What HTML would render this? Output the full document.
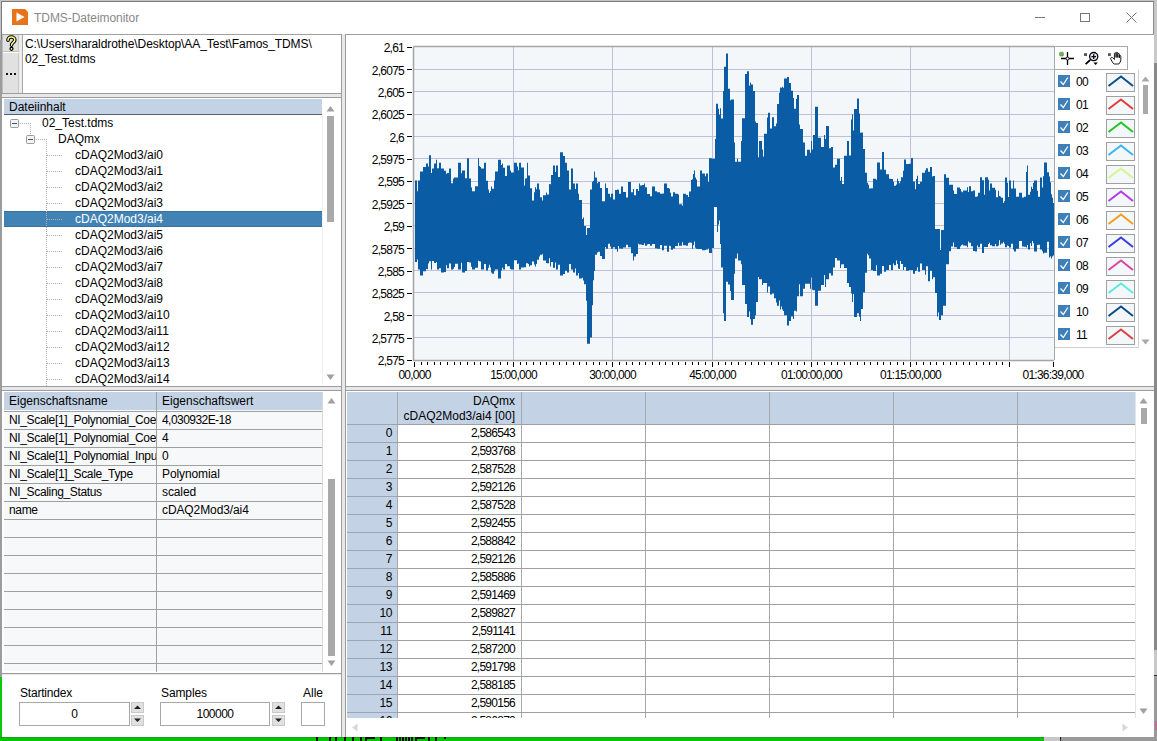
<!DOCTYPE html><html><head><meta charset="utf-8"><style>
*{margin:0;padding:0}
html,body{width:1157px;height:741px;overflow:hidden;background:#8c8c8c;font-family:"Liberation Sans",sans-serif;color:#000}
.a{position:absolute}
.t{position:absolute;white-space:nowrap;font-size:12px}
</style></head><body><div class="a" style="left:1154px;top:0px;width:3px;height:63px;background:#c8c8c8"></div>
<div class="a" style="left:1154px;top:63px;width:3px;height:587px;background:#8a8a8a"></div>
<div class="a" style="left:1154px;top:650px;width:3px;height:25px;background:#c8c8c8"></div>
<div class="a" style="left:1154px;top:675px;width:3px;height:1px;background:#333"></div>
<div class="a" style="left:1154px;top:676px;width:3px;height:65px;background:#9a9a9a"></div>
<div class="a" style="left:1155px;top:721px;width:2px;height:9px;background:#c07090"></div>
<div class="a" style="left:0px;top:0px;width:1154px;height:737px;background:#c4c4c4"></div>
<div class="a" style="left:1px;top:1px;width:1153px;height:736px;background:#fff;border-top:1px solid #7c7c7c;border-left:1px solid #7c7c7c;border-right:1px solid #8a8a8a;box-sizing:border-box"></div>
<div class="a" style="left:0px;top:40px;width:2px;height:637px;background:#9c9c9c"></div>
<svg class="a" style="left:12px;top:9px" width="17" height="17" viewBox="0 0 17 17"><path d="M0 0H13L16 3V16H0Z" fill="#e8731d"/><path d="M4.5 3.5L12.5 8L4.5 12.5Z" fill="#fff"/></svg>
<div class="t" style="left:34px;top:10px;line-height:16px;color:#888;font-size:12px;letter-spacing:-0.05px">TDMS-Dateimonitor</div>
<div class="a" style="left:1035px;top:17px;width:10px;height:1px;background:#777"></div>
<div class="a" style="left:1080px;top:13px;width:10px;height:9px;border:1px solid #777;box-sizing:border-box"></div>
<svg class="a" style="left:1126px;top:12px" width="11" height="11"><path d="M0.5 0.5L10.5 10.5M10.5 0.5L0.5 10.5" stroke="#777" stroke-width="1"/></svg>
<div class="a" style="left:2px;top:34px;width:1152px;height:1px;background:#a0a0a0"></div>
<div class="a" style="left:2px;top:93px;width:339px;height:1px;background:#9c9c9c"></div>
<div class="a" style="left:2px;top:94px;width:339px;height:3px;background:#e8e8ea"></div>
<div class="a" style="left:2px;top:97px;width:339px;height:1px;background:#9c9c9c"></div>
<div class="a" style="left:2px;top:386px;width:1152px;height:1px;background:#9c9c9c"></div>
<div class="a" style="left:2px;top:387px;width:1152px;height:3px;background:#e8e8ea"></div>
<div class="a" style="left:2px;top:390px;width:1152px;height:1px;background:#9c9c9c"></div>
<div class="a" style="left:2px;top:673px;width:339px;height:1px;background:#9c9c9c"></div>
<div class="a" style="left:2px;top:674px;width:339px;height:1px;background:#e8e8ea"></div>
<div class="a" style="left:341px;top:34px;width:1px;height:703px;background:#9c9c9c"></div>
<div class="a" style="left:342px;top:34px;width:3px;height:703px;background:#e8e8ea"></div>
<div class="a" style="left:345px;top:34px;width:1px;height:703px;background:#9c9c9c"></div>
<div class="a" style="left:3px;top:35px;width:16px;height:17px;background:#e1e1e1;border-right:1px solid #c8c8c8;border-bottom:1px solid #bdbdbd;box-sizing:border-box"></div>
<svg class="a" style="left:5px;top:35px" width="13" height="17" viewBox="0 0 13 17"><path d="M3 5.2C3 3 4.5 2 6.3 2C8.2 2 9.8 3.2 9.8 5C9.8 7.3 6.5 7.6 6.5 10.3" stroke="#000" stroke-width="3.6" fill="none" stroke-linecap="round"/><circle cx="6.5" cy="13.8" r="2.1" fill="#000"/><path d="M3 5.2C3 3 4.5 2 6.3 2C8.2 2 9.8 3.2 9.8 5C9.8 7.3 6.5 7.6 6.5 10.3" stroke="#ffff8c" stroke-width="1.5" fill="none" stroke-linecap="round"/><circle cx="6.5" cy="13.8" r="0.9" fill="#ffff8c"/></svg>
<div class="a" style="left:3px;top:53px;width:16px;height:40px;background:#e1e1e1;border-right:1px solid #c8c8c8;box-sizing:border-box"></div>
<div class="a" style="left:6px;top:73px;width:2px;height:2px;background:#111"></div>
<div class="a" style="left:10px;top:73px;width:2px;height:2px;background:#111"></div>
<div class="a" style="left:14px;top:73px;width:2px;height:2px;background:#111"></div>
<div class="a" style="left:19px;top:35px;width:3px;height:58px;background:#ececec"></div>
<div class="a" style="left:2px;top:35px;width:1px;height:58px;background:#bdbdbd"></div>
<div class="a" style="left:22px;top:35px;width:1px;height:58px;background:#a8a8a8"></div>
<div class="t" style="left:25px;top:37px;line-height:16px;font-size:12px;line-height:15px;letter-spacing:-0.07px">C:\Users\haraldrothe\Desktop\AA_Test\Famos_TDMS\<br>02_Test.tdms</div>
<div class="a" style="left:3px;top:98px;width:338px;height:288px;background:#fff"></div>
<div class="a" style="left:4px;top:99px;width:318px;height:15px;background:#c3d3e5"></div>
<div class="a" style="left:4px;top:114px;width:318px;height:1px;background:#56606c"></div>
<div class="t" style="left:9px;top:99px;line-height:16px;font-size:12px">Dateiinhalt</div>
<svg class="a" style="left:326px;top:105px" width="9" height="7"><path d="M0.5 6.5L4.5 1L8.5 6.5Z" fill="#a0a0a0"/></svg>
<div class="a" style="left:327px;top:116px;width:7px;height:106px;background:#a9a9a9"></div>
<svg class="a" style="left:326px;top:374px" width="9" height="7"><path d="M0.5 0.5L4.5 6L8.5 0.5Z" fill="#a0a0a0"/></svg>
<div class="a" style="left:322px;top:115px;width:1px;height:270px;background:#f0f0f0"></div>
<div class="a" style="left:4px;top:211px;width:318px;height:16px;background:#4283b6;border-top:1px solid #3c6f9c;border-bottom:1px solid #3c6f9c;box-sizing:border-box"></div>
<svg class="a" style="left:10px;top:119px" width="9" height="9"><rect x="0.5" y="0.5" width="8" height="8" rx="1" fill="#f4f4f6" stroke="#9a9a9a"/><path d="M2 4.5H7" stroke="#405070"/></svg>
<div class="a" style="left:20px;top:123px;width:10px;height:1px;background-image:linear-gradient(90deg,#b0b0b0 50%,transparent 50%);background-size:2px 1px"></div>
<div class="a" style="left:30px;top:123px;width:1px;height:13px;background-image:linear-gradient(180deg,#b0b0b0 50%,transparent 50%);background-size:1px 2px"></div>
<svg class="a" style="left:26px;top:135px" width="9" height="9"><rect x="0.5" y="0.5" width="8" height="8" rx="1" fill="#f4f4f6" stroke="#9a9a9a"/><path d="M2 4.5H7" stroke="#405070"/></svg>
<div class="a" style="left:36px;top:139px;width:10px;height:1px;background-image:linear-gradient(90deg,#b0b0b0 50%,transparent 50%);background-size:2px 1px"></div>
<div class="a" style="left:46px;top:139px;width:1px;height:248px;background-image:linear-gradient(180deg,#b0b0b0 50%,transparent 50%);background-size:1px 2px"></div>
<div class="t" style="left:42px;top:115px;line-height:16px;font-size:12px">02_Test.tdms</div>
<div class="t" style="left:58px;top:131px;line-height:16px;font-size:12px">DAQmx</div>
<div class="a" style="left:47px;top:155px;width:15px;height:1px;background-image:linear-gradient(90deg,#b0b0b0 50%,transparent 50%);background-size:2px 1px"></div>
<div class="t" style="left:75px;top:147px;line-height:16px;font-size:12px;color:#000">cDAQ2Mod3/ai0</div>
<div class="a" style="left:47px;top:171px;width:15px;height:1px;background-image:linear-gradient(90deg,#b0b0b0 50%,transparent 50%);background-size:2px 1px"></div>
<div class="t" style="left:75px;top:163px;line-height:16px;font-size:12px;color:#000">cDAQ2Mod3/ai1</div>
<div class="a" style="left:47px;top:187px;width:15px;height:1px;background-image:linear-gradient(90deg,#b0b0b0 50%,transparent 50%);background-size:2px 1px"></div>
<div class="t" style="left:75px;top:179px;line-height:16px;font-size:12px;color:#000">cDAQ2Mod3/ai2</div>
<div class="a" style="left:47px;top:203px;width:15px;height:1px;background-image:linear-gradient(90deg,#b0b0b0 50%,transparent 50%);background-size:2px 1px"></div>
<div class="t" style="left:75px;top:195px;line-height:16px;font-size:12px;color:#000">cDAQ2Mod3/ai3</div>
<div class="a" style="left:47px;top:219px;width:15px;height:1px;background-image:linear-gradient(90deg,#b0b0b0 50%,transparent 50%);background-size:2px 1px"></div>
<div class="t" style="left:75px;top:211px;line-height:16px;font-size:12px;color:#fff">cDAQ2Mod3/ai4</div>
<div class="a" style="left:47px;top:235px;width:15px;height:1px;background-image:linear-gradient(90deg,#b0b0b0 50%,transparent 50%);background-size:2px 1px"></div>
<div class="t" style="left:75px;top:227px;line-height:16px;font-size:12px;color:#000">cDAQ2Mod3/ai5</div>
<div class="a" style="left:47px;top:251px;width:15px;height:1px;background-image:linear-gradient(90deg,#b0b0b0 50%,transparent 50%);background-size:2px 1px"></div>
<div class="t" style="left:75px;top:243px;line-height:16px;font-size:12px;color:#000">cDAQ2Mod3/ai6</div>
<div class="a" style="left:47px;top:267px;width:15px;height:1px;background-image:linear-gradient(90deg,#b0b0b0 50%,transparent 50%);background-size:2px 1px"></div>
<div class="t" style="left:75px;top:259px;line-height:16px;font-size:12px;color:#000">cDAQ2Mod3/ai7</div>
<div class="a" style="left:47px;top:283px;width:15px;height:1px;background-image:linear-gradient(90deg,#b0b0b0 50%,transparent 50%);background-size:2px 1px"></div>
<div class="t" style="left:75px;top:275px;line-height:16px;font-size:12px;color:#000">cDAQ2Mod3/ai8</div>
<div class="a" style="left:47px;top:299px;width:15px;height:1px;background-image:linear-gradient(90deg,#b0b0b0 50%,transparent 50%);background-size:2px 1px"></div>
<div class="t" style="left:75px;top:291px;line-height:16px;font-size:12px;color:#000">cDAQ2Mod3/ai9</div>
<div class="a" style="left:47px;top:315px;width:15px;height:1px;background-image:linear-gradient(90deg,#b0b0b0 50%,transparent 50%);background-size:2px 1px"></div>
<div class="t" style="left:75px;top:307px;line-height:16px;font-size:12px;color:#000">cDAQ2Mod3/ai10</div>
<div class="a" style="left:47px;top:331px;width:15px;height:1px;background-image:linear-gradient(90deg,#b0b0b0 50%,transparent 50%);background-size:2px 1px"></div>
<div class="t" style="left:75px;top:323px;line-height:16px;font-size:12px;color:#000">cDAQ2Mod3/ai11</div>
<div class="a" style="left:47px;top:347px;width:15px;height:1px;background-image:linear-gradient(90deg,#b0b0b0 50%,transparent 50%);background-size:2px 1px"></div>
<div class="t" style="left:75px;top:339px;line-height:16px;font-size:12px;color:#000">cDAQ2Mod3/ai12</div>
<div class="a" style="left:47px;top:363px;width:15px;height:1px;background-image:linear-gradient(90deg,#b0b0b0 50%,transparent 50%);background-size:2px 1px"></div>
<div class="t" style="left:75px;top:355px;line-height:16px;font-size:12px;color:#000">cDAQ2Mod3/ai13</div>
<div class="a" style="left:47px;top:379px;width:15px;height:1px;background-image:linear-gradient(90deg,#b0b0b0 50%,transparent 50%);background-size:2px 1px"></div>
<div class="t" style="left:75px;top:371px;line-height:16px;font-size:12px;color:#000">cDAQ2Mod3/ai14</div>
<div class="a" style="left:3px;top:391px;width:338px;height:282px;background:#fff"></div>
<div class="a" style="left:4px;top:392px;width:318px;height:279px;background:#f7f8fa"></div>
<div class="a" style="left:4px;top:392px;width:318px;height:18px;background:#c3d3e5"></div>
<div class="a" style="left:156px;top:392px;width:1px;height:280px;background:#a0a0a0"></div>
<div class="a" style="left:4px;top:411px;width:318px;height:1px;background:#a0a0a0"></div>
<div class="a" style="left:4px;top:429px;width:318px;height:1px;background:#a0a0a0"></div>
<div class="a" style="left:4px;top:447px;width:318px;height:1px;background:#a0a0a0"></div>
<div class="a" style="left:4px;top:465px;width:318px;height:1px;background:#a0a0a0"></div>
<div class="a" style="left:4px;top:483px;width:318px;height:1px;background:#a0a0a0"></div>
<div class="a" style="left:4px;top:501px;width:318px;height:1px;background:#a0a0a0"></div>
<div class="a" style="left:4px;top:519px;width:318px;height:1px;background:#a0a0a0"></div>
<div class="a" style="left:4px;top:537px;width:318px;height:1px;background:#a0a0a0"></div>
<div class="a" style="left:4px;top:555px;width:318px;height:1px;background:#a0a0a0"></div>
<div class="a" style="left:4px;top:573px;width:318px;height:1px;background:#a0a0a0"></div>
<div class="a" style="left:4px;top:591px;width:318px;height:1px;background:#a0a0a0"></div>
<div class="a" style="left:4px;top:609px;width:318px;height:1px;background:#a0a0a0"></div>
<div class="a" style="left:4px;top:627px;width:318px;height:1px;background:#a0a0a0"></div>
<div class="a" style="left:4px;top:645px;width:318px;height:1px;background:#a0a0a0"></div>
<div class="a" style="left:4px;top:663px;width:318px;height:1px;background:#a0a0a0"></div>
<div class="a" style="left:322px;top:392px;width:1px;height:280px;background:#d8d8d8"></div>
<div class="t" style="left:9px;top:392px;line-height:16px;font-size:12px;line-height:18px">Eigenschaftsname</div>
<div class="t" style="left:162px;top:392px;line-height:16px;font-size:12px;line-height:18px">Eigenschaftswert</div>
<div class="t" style="left:9px;top:411px;width:147px;overflow:hidden;line-height:18px;font-size:12px;letter-spacing:-0.35px">NI_Scale[1]_Polynomial_Coefficients</div>
<div class="t" style="left:162px;top:411px;line-height:16px;font-size:12px;line-height:18px;letter-spacing:-0.55px">4,030932E-18</div>
<div class="t" style="left:9px;top:429px;width:147px;overflow:hidden;line-height:18px;font-size:12px;letter-spacing:-0.35px">NI_Scale[1]_Polynomial_Coefficients</div>
<div class="t" style="left:162px;top:429px;line-height:16px;font-size:12px;line-height:18px;letter-spacing:-0.1px">4</div>
<div class="t" style="left:9px;top:447px;width:147px;overflow:hidden;line-height:18px;font-size:12px;letter-spacing:-0.35px">NI_Scale[1]_Polynomial_Input</div>
<div class="t" style="left:162px;top:447px;line-height:16px;font-size:12px;line-height:18px;letter-spacing:-0.1px">0</div>
<div class="t" style="left:9px;top:465px;width:147px;overflow:hidden;line-height:18px;font-size:12px;letter-spacing:-0.35px">NI_Scale[1]_Scale_Type</div>
<div class="t" style="left:162px;top:465px;line-height:16px;font-size:12px;line-height:18px;letter-spacing:-0.1px">Polynomial</div>
<div class="t" style="left:9px;top:483px;width:147px;overflow:hidden;line-height:18px;font-size:12px;letter-spacing:-0.35px">NI_Scaling_Status</div>
<div class="t" style="left:162px;top:483px;line-height:16px;font-size:12px;line-height:18px;letter-spacing:-0.1px">scaled</div>
<div class="t" style="left:9px;top:501px;width:147px;overflow:hidden;line-height:18px;font-size:12px;letter-spacing:-0.35px">name</div>
<div class="t" style="left:162px;top:501px;line-height:16px;font-size:12px;line-height:18px;letter-spacing:-0.1px">cDAQ2Mod3/ai4</div>
<svg class="a" style="left:327px;top:397px" width="9" height="7"><path d="M0.5 6.5L4.5 1L8.5 6.5Z" fill="#a0a0a0"/></svg>
<div class="a" style="left:328px;top:479px;width:7px;height:177px;background:#a9a9a9"></div>
<svg class="a" style="left:327px;top:660px" width="9" height="7"><path d="M0.5 0.5L4.5 6L8.5 0.5Z" fill="#a0a0a0"/></svg>
<div class="t" style="left:20px;top:685px;line-height:16px;font-size:12px;letter-spacing:-0.2px">Startindex</div>
<div class="a" style="left:19px;top:702px;width:111px;height:24px;background:#fff;border:1px solid #a8a8a8;box-sizing:border-box"></div>
<div class="t" style="left:19px;top:706px;line-height:16px;font-size:12px;width:111px;text-align:center">0</div>
<div class="a" style="left:131px;top:702px;width:13px;height:11px;background:#e1e1e1;border:1px solid #c9c9c9;box-sizing:border-box"></div>
<svg class="a" style="left:134px;top:705px" width="7" height="5"><path d="M0 4L3.5 0.5L7 4Z" fill="#222"/></svg>
<div class="a" style="left:131px;top:715px;width:13px;height:11px;background:#e1e1e1;border:1px solid #c9c9c9;box-sizing:border-box"></div>
<svg class="a" style="left:134px;top:718px" width="7" height="5"><path d="M0 0.5L3.5 4L7 0.5Z" fill="#222"/></svg>
<div class="t" style="left:161px;top:685px;line-height:16px;font-size:12px;letter-spacing:-0.1px">Samples</div>
<div class="a" style="left:160px;top:702px;width:110px;height:24px;background:#fff;border:1px solid #a8a8a8;box-sizing:border-box"></div>
<div class="t" style="left:160px;top:706px;line-height:16px;font-size:12px;width:110px;text-align:center;letter-spacing:-0.5px">100000</div>
<div class="a" style="left:272px;top:702px;width:13px;height:11px;background:#e1e1e1;border:1px solid #c9c9c9;box-sizing:border-box"></div>
<svg class="a" style="left:275px;top:705px" width="7" height="5"><path d="M0 4L3.5 0.5L7 4Z" fill="#222"/></svg>
<div class="a" style="left:272px;top:715px;width:13px;height:11px;background:#e1e1e1;border:1px solid #c9c9c9;box-sizing:border-box"></div>
<svg class="a" style="left:275px;top:718px" width="7" height="5"><path d="M0 0.5L3.5 4L7 0.5Z" fill="#222"/></svg>
<div class="t" style="left:303px;top:685px;line-height:16px;font-size:12px">Alle</div>
<div class="a" style="left:301px;top:702px;width:24px;height:24px;background:#fff;border:1px solid #a8a8a8;box-sizing:border-box"></div>
<div class="a" style="left:0px;top:677px;width:2px;height:64px;background:#0ac80a"></div>
<div class="a" style="left:0px;top:737px;width:1044px;height:4px;background:#00c800"></div>
<div class="a" style="left:0px;top:737px;width:1044px;height:1px;background:#1f9a1f"></div>
<div class="a" style="left:1044px;top:737px;width:16px;height:4px;background:#c8c8c8"></div>
<div class="a" style="left:316px;top:737px;width:2px;height:4px;background:#111"></div>
<div class="a" style="left:329px;top:737px;width:2px;height:4px;background:#111"></div>
<div class="a" style="left:335px;top:737px;width:2px;height:4px;background:#111"></div>
<div class="a" style="left:344px;top:737px;width:2px;height:4px;background:#111"></div>
<div class="a" style="left:352px;top:737px;width:2px;height:4px;background:#111"></div>
<div class="a" style="left:360px;top:737px;width:2px;height:4px;background:#111"></div>
<div class="a" style="left:365px;top:737px;width:2px;height:4px;background:#111"></div>
<div class="a" style="left:380px;top:737px;width:2px;height:4px;background:#111"></div>
<div class="a" style="left:396px;top:737px;width:2px;height:4px;background:#111"></div>
<div class="a" style="left:399px;top:737px;width:2px;height:4px;background:#111"></div>
<div class="a" style="left:402px;top:737px;width:2px;height:4px;background:#111"></div>
<div class="a" style="left:405px;top:737px;width:2px;height:4px;background:#111"></div>
<div class="a" style="left:408px;top:737px;width:2px;height:4px;background:#111"></div>
<div class="a" style="left:411px;top:737px;width:2px;height:4px;background:#111"></div>
<div class="a" style="left:415px;top:737px;width:2px;height:4px;background:#111"></div>
<div class="a" style="left:428px;top:737px;width:2px;height:4px;background:#111"></div>
<div class="a" style="left:435px;top:737px;width:2px;height:4px;background:#111"></div>
<div class="a" style="left:365px;top:737px;width:10px;height:1.5px;background:#111"></div>
<div class="a" style="left:415px;top:737px;width:10px;height:1.5px;background:#111"></div>
<div class="a" style="left:444px;top:737px;width:2px;height:2px;background:#111"></div>
<div class="a" style="left:1060px;top:737px;width:1px;height:4px;background:#222"></div>
<div class="a" style="left:1061px;top:737px;width:93px;height:4px;background:#9a9a9a"></div>
<div class="a" style="left:346px;top:391px;width:808px;height:346px;background:#fff"></div>
<div class="a" style="left:347px;top:392px;width:788px;height:326px;background:#fff"></div>
<div class="a" style="left:347px;top:392px;width:788px;height:32px;background:#c3d3e5"></div>
<div class="a" style="left:347px;top:424px;width:50px;height:294px;background:#c3d3e5"></div>
<div class="a" style="left:397px;top:392px;width:1px;height:326px;background:#a8a8a8"></div>
<div class="a" style="left:521px;top:392px;width:1px;height:326px;background:#a8a8a8"></div>
<div class="a" style="left:645px;top:392px;width:1px;height:326px;background:#a8a8a8"></div>
<div class="a" style="left:769px;top:392px;width:1px;height:326px;background:#a8a8a8"></div>
<div class="a" style="left:893px;top:392px;width:1px;height:326px;background:#a8a8a8"></div>
<div class="a" style="left:1017px;top:392px;width:1px;height:326px;background:#a8a8a8"></div>
<div class="a" style="left:347px;top:424px;width:50px;height:1px;background:#9aa6b4"></div>
<div class="a" style="left:397px;top:424px;width:738px;height:1px;background:#a0a0a0"></div>
<div class="a" style="left:347px;top:442px;width:50px;height:1px;background:#9aa6b4"></div>
<div class="a" style="left:397px;top:442px;width:738px;height:1px;background:#a0a0a0"></div>
<div class="a" style="left:347px;top:460px;width:50px;height:1px;background:#9aa6b4"></div>
<div class="a" style="left:397px;top:460px;width:738px;height:1px;background:#a0a0a0"></div>
<div class="a" style="left:347px;top:478px;width:50px;height:1px;background:#9aa6b4"></div>
<div class="a" style="left:397px;top:478px;width:738px;height:1px;background:#a0a0a0"></div>
<div class="a" style="left:347px;top:496px;width:50px;height:1px;background:#9aa6b4"></div>
<div class="a" style="left:397px;top:496px;width:738px;height:1px;background:#a0a0a0"></div>
<div class="a" style="left:347px;top:514px;width:50px;height:1px;background:#9aa6b4"></div>
<div class="a" style="left:397px;top:514px;width:738px;height:1px;background:#a0a0a0"></div>
<div class="a" style="left:347px;top:532px;width:50px;height:1px;background:#9aa6b4"></div>
<div class="a" style="left:397px;top:532px;width:738px;height:1px;background:#a0a0a0"></div>
<div class="a" style="left:347px;top:550px;width:50px;height:1px;background:#9aa6b4"></div>
<div class="a" style="left:397px;top:550px;width:738px;height:1px;background:#a0a0a0"></div>
<div class="a" style="left:347px;top:568px;width:50px;height:1px;background:#9aa6b4"></div>
<div class="a" style="left:397px;top:568px;width:738px;height:1px;background:#a0a0a0"></div>
<div class="a" style="left:347px;top:586px;width:50px;height:1px;background:#9aa6b4"></div>
<div class="a" style="left:397px;top:586px;width:738px;height:1px;background:#a0a0a0"></div>
<div class="a" style="left:347px;top:604px;width:50px;height:1px;background:#9aa6b4"></div>
<div class="a" style="left:397px;top:604px;width:738px;height:1px;background:#a0a0a0"></div>
<div class="a" style="left:347px;top:622px;width:50px;height:1px;background:#9aa6b4"></div>
<div class="a" style="left:397px;top:622px;width:738px;height:1px;background:#a0a0a0"></div>
<div class="a" style="left:347px;top:640px;width:50px;height:1px;background:#9aa6b4"></div>
<div class="a" style="left:397px;top:640px;width:738px;height:1px;background:#a0a0a0"></div>
<div class="a" style="left:347px;top:658px;width:50px;height:1px;background:#9aa6b4"></div>
<div class="a" style="left:397px;top:658px;width:738px;height:1px;background:#a0a0a0"></div>
<div class="a" style="left:347px;top:676px;width:50px;height:1px;background:#9aa6b4"></div>
<div class="a" style="left:397px;top:676px;width:738px;height:1px;background:#a0a0a0"></div>
<div class="a" style="left:347px;top:694px;width:50px;height:1px;background:#9aa6b4"></div>
<div class="a" style="left:397px;top:694px;width:738px;height:1px;background:#a0a0a0"></div>
<div class="a" style="left:347px;top:712px;width:50px;height:1px;background:#9aa6b4"></div>
<div class="a" style="left:397px;top:712px;width:738px;height:1px;background:#a0a0a0"></div>
<div class="a" style="left:1135px;top:392px;width:1px;height:326px;background:#e4e4e4"></div>
<div class="t" style="right:642px;top:394px;line-height:16px;text-align:right;font-size:12px;line-height:15px;letter-spacing:0px">DAQmx<br>cDAQ2Mod3/ai4 [00]</div>
<div class="t" style="right:765px;top:424px;line-height:16px;text-align:right;font-size:12px;line-height:18px;letter-spacing:-0.4px">0</div>
<div class="t" style="right:642px;top:424px;line-height:16px;text-align:right;font-size:12px;line-height:18px;letter-spacing:-0.75px">2,586543</div>
<div class="t" style="right:765px;top:442px;line-height:16px;text-align:right;font-size:12px;line-height:18px;letter-spacing:-0.4px">1</div>
<div class="t" style="right:642px;top:442px;line-height:16px;text-align:right;font-size:12px;line-height:18px;letter-spacing:-0.75px">2,593768</div>
<div class="t" style="right:765px;top:460px;line-height:16px;text-align:right;font-size:12px;line-height:18px;letter-spacing:-0.4px">2</div>
<div class="t" style="right:642px;top:460px;line-height:16px;text-align:right;font-size:12px;line-height:18px;letter-spacing:-0.75px">2,587528</div>
<div class="t" style="right:765px;top:478px;line-height:16px;text-align:right;font-size:12px;line-height:18px;letter-spacing:-0.4px">3</div>
<div class="t" style="right:642px;top:478px;line-height:16px;text-align:right;font-size:12px;line-height:18px;letter-spacing:-0.75px">2,592126</div>
<div class="t" style="right:765px;top:496px;line-height:16px;text-align:right;font-size:12px;line-height:18px;letter-spacing:-0.4px">4</div>
<div class="t" style="right:642px;top:496px;line-height:16px;text-align:right;font-size:12px;line-height:18px;letter-spacing:-0.75px">2,587528</div>
<div class="t" style="right:765px;top:514px;line-height:16px;text-align:right;font-size:12px;line-height:18px;letter-spacing:-0.4px">5</div>
<div class="t" style="right:642px;top:514px;line-height:16px;text-align:right;font-size:12px;line-height:18px;letter-spacing:-0.75px">2,592455</div>
<div class="t" style="right:765px;top:532px;line-height:16px;text-align:right;font-size:12px;line-height:18px;letter-spacing:-0.4px">6</div>
<div class="t" style="right:642px;top:532px;line-height:16px;text-align:right;font-size:12px;line-height:18px;letter-spacing:-0.75px">2,588842</div>
<div class="t" style="right:765px;top:550px;line-height:16px;text-align:right;font-size:12px;line-height:18px;letter-spacing:-0.4px">7</div>
<div class="t" style="right:642px;top:550px;line-height:16px;text-align:right;font-size:12px;line-height:18px;letter-spacing:-0.75px">2,592126</div>
<div class="t" style="right:765px;top:568px;line-height:16px;text-align:right;font-size:12px;line-height:18px;letter-spacing:-0.4px">8</div>
<div class="t" style="right:642px;top:568px;line-height:16px;text-align:right;font-size:12px;line-height:18px;letter-spacing:-0.75px">2,585886</div>
<div class="t" style="right:765px;top:586px;line-height:16px;text-align:right;font-size:12px;line-height:18px;letter-spacing:-0.4px">9</div>
<div class="t" style="right:642px;top:586px;line-height:16px;text-align:right;font-size:12px;line-height:18px;letter-spacing:-0.75px">2,591469</div>
<div class="t" style="right:765px;top:604px;line-height:16px;text-align:right;font-size:12px;line-height:18px;letter-spacing:-0.4px">10</div>
<div class="t" style="right:642px;top:604px;line-height:16px;text-align:right;font-size:12px;line-height:18px;letter-spacing:-0.75px">2,589827</div>
<div class="t" style="right:765px;top:622px;line-height:16px;text-align:right;font-size:12px;line-height:18px;letter-spacing:-0.4px">11</div>
<div class="t" style="right:642px;top:622px;line-height:16px;text-align:right;font-size:12px;line-height:18px;letter-spacing:-0.75px">2,591141</div>
<div class="t" style="right:765px;top:640px;line-height:16px;text-align:right;font-size:12px;line-height:18px;letter-spacing:-0.4px">12</div>
<div class="t" style="right:642px;top:640px;line-height:16px;text-align:right;font-size:12px;line-height:18px;letter-spacing:-0.75px">2,587200</div>
<div class="t" style="right:765px;top:658px;line-height:16px;text-align:right;font-size:12px;line-height:18px;letter-spacing:-0.4px">13</div>
<div class="t" style="right:642px;top:658px;line-height:16px;text-align:right;font-size:12px;line-height:18px;letter-spacing:-0.75px">2,591798</div>
<div class="t" style="right:765px;top:676px;line-height:16px;text-align:right;font-size:12px;line-height:18px;letter-spacing:-0.4px">14</div>
<div class="t" style="right:642px;top:676px;line-height:16px;text-align:right;font-size:12px;line-height:18px;letter-spacing:-0.75px">2,588185</div>
<div class="t" style="right:765px;top:694px;line-height:16px;text-align:right;font-size:12px;line-height:18px;letter-spacing:-0.4px">15</div>
<div class="t" style="right:642px;top:694px;line-height:16px;text-align:right;font-size:12px;line-height:18px;letter-spacing:-0.75px">2,590156</div>
<div class="t" style="right:765px;top:712px;line-height:16px;text-align:right;font-size:12px;line-height:18px;letter-spacing:-0.4px">16</div>
<div class="t" style="right:642px;top:712px;line-height:16px;text-align:right;font-size:12px;line-height:18px;letter-spacing:-0.75px">2,586872</div>
<div class="a" style="left:346px;top:718px;width:808px;height:19px;background:#fff"></div>
<svg class="a" style="left:1139px;top:397px" width="9" height="7"><path d="M0.5 6.5L4.5 1L8.5 6.5Z" fill="#a0a0a0"/></svg>
<div class="a" style="left:1141px;top:408px;width:6px;height:16px;background:#a9a9a9"></div>
<svg class="a" style="left:1139px;top:708px" width="9" height="7"><path d="M0.5 0.5L4.5 6L8.5 0.5Z" fill="#a0a0a0"/></svg>
<svg class="a" style="left:351px;top:723px" width="7" height="9"><path d="M6.5 0.5L1 4.5L6.5 8.5Z" fill="#d8d8d8"/></svg>
<svg class="a" style="left:1122px;top:723px" width="7" height="9"><path d="M0.5 0.5L6 4.5L0.5 8.5Z" fill="#d8d8d8"/></svg>
<div class="a" style="left:346px;top:35px;width:808px;height:351px;background:#fff"></div>
<svg class="a" style="left:346px;top:35px" width="808" height="351" viewBox="346 35 808 351">
<rect x="414" y="47" width="640" height="313" fill="#f4f7fa"/>
<path d="M414 69.5H1054M414 91.5H1054M414 114.5H1054M414 136.5H1054M414 158.5H1054M414 181.5H1054M414 203.5H1054M414 225.5H1054M414 248.5H1054M414 270.5H1054M414 292.5H1054M414 315.5H1054M414 337.5H1054M513.5 47V360M612.5 47V360M712.5 47V360M811.5 47V360M910.5 47V360M1009.5 47V360" stroke="#bfbfda" stroke-width="1" fill="none"/>
<path d="M415.0 180.5 417.0 180.5 417.0 191.2 418.0 191.2 418.0 180.5 420.0 180.5 420.0 171.6 423.0 171.6 423.0 167.1 426.0 167.1 426.0 163.6 427.0 163.6 427.0 163.4 428.0 163.4 428.0 166.5 429.0 166.5 429.0 155.2 431.0 155.2 431.0 172.9 432.0 172.9 432.0 168.6 434.0 168.6 434.0 163.4 436.0 163.4 436.0 159.7 437.0 159.7 437.0 168.2 439.0 168.2 439.0 162.7 441.0 162.7 441.0 168.5 444.0 168.5 444.0 170.7 446.0 170.7 446.0 173.7 447.0 173.7 447.0 173.1 449.0 173.1 449.0 168.6 451.0 168.6 451.0 183.3 453.0 183.3 453.0 178.5 454.0 178.5 454.0 177.5 455.0 177.5 455.0 177.5 458.0 177.5 458.0 162.7 461.0 162.7 461.0 173.3 462.0 173.3 462.0 170.6 465.0 170.6 465.0 178.2 467.0 178.2 467.0 158.2 469.0 158.2 469.0 178.5 471.0 178.5 471.0 187.6 472.0 187.6 472.0 191.2 475.0 191.2 475.0 186.2 478.0 186.2 478.0 158.2 479.0 158.2 479.0 166.1 480.0 166.1 480.0 167.0 481.0 167.0 481.0 168.6 484.0 168.6 484.0 162.7 486.0 162.7 486.0 180.7 488.0 180.7 488.0 189.4 489.0 189.4 489.0 193.1 490.0 193.1 490.0 191.0 491.0 191.0 491.0 186.4 492.0 186.4 492.0 188.7 494.0 188.7 494.0 180.5 495.0 180.5 495.0 171.6 498.0 171.6 498.0 159.7 501.0 159.7 501.0 165.1 502.0 165.1 502.0 163.5 503.0 163.5 503.0 167.7 505.0 167.7 505.0 176.1 507.0 176.1 507.0 165.6 510.0 165.6 510.0 170.5 511.0 170.5 511.0 172.4 514.0 172.4 514.0 162.7 517.0 162.7 517.0 166.4 518.0 166.4 518.0 170.2 519.0 170.2 519.0 162.7 521.0 162.7 521.0 167.5 524.0 167.5 524.0 185.4 525.0 185.4 525.0 178.4 526.0 178.4 526.0 178.3 527.0 178.3 527.0 162.7 528.0 162.7 528.0 175.6 529.0 175.6 529.0 175.4 530.0 175.4 530.0 188.2 532.0 188.2 532.0 200.5 534.0 200.5 534.0 192.3 535.0 192.3 535.0 187.2 536.0 187.2 536.0 189.2 537.0 189.2 537.0 183.4 539.0 183.4 539.0 189.4 540.0 189.4 540.0 197.2 542.0 197.2 542.0 200.4 543.0 200.4 543.0 195.3 546.0 195.3 546.0 192.6 547.0 192.6 547.0 194.5 549.0 194.5 549.0 183.9 550.0 183.9 550.0 184.3 551.0 184.3 551.0 175.1 553.0 175.1 553.0 165.6 555.0 165.6 555.0 171.9 556.0 171.9 556.0 165.6 558.0 165.6 558.0 177.0 560.0 177.0 560.0 152.3 563.0 152.3 563.0 156.0 565.0 156.0 565.0 162.7 567.0 162.7 567.0 170.6 569.0 170.6 569.0 189.4 571.0 189.4 571.0 168.6 573.0 168.6 573.0 183.4 575.0 183.4 575.0 188.9 576.0 188.9 576.0 183.4 578.0 183.4 578.0 193.7 579.0 193.7 579.0 200.0 582.0 200.0 582.0 219.0 583.0 219.0 583.0 217.5 584.0 217.5 584.0 226.0 586.0 226.0 586.0 235.1 587.0 235.1 587.0 228.0 590.0 228.0 590.0 189.4 592.0 189.4 592.0 181.7 593.0 181.7 593.0 180.8 594.0 180.8 594.0 171.6 595.0 171.6 595.0 177.5 597.0 177.5 597.0 183.3 598.0 183.3 598.0 181.9 600.0 181.9 600.0 188.1 602.0 188.1 602.0 201.2 605.0 201.2 605.0 183.4 606.0 183.4 606.0 187.9 608.0 187.9 608.0 193.8 610.0 193.8 610.0 197.3 611.0 197.3 611.0 193.8 613.0 193.8 613.0 199.5 615.0 199.5 615.0 190.1 617.0 190.1 617.0 189.4 618.0 189.4 618.0 189.8 619.0 189.8 619.0 193.8 621.0 193.8 621.0 186.4 623.0 186.4 623.0 191.9 626.0 191.9 626.0 197.4 628.0 197.4 628.0 181.9 631.0 181.9 631.0 192.2 633.0 192.2 633.0 188.9 634.0 188.9 634.0 195.3 636.0 195.3 636.0 188.9 638.0 188.9 638.0 190.9 639.0 190.9 639.0 183.4 640.0 183.4 640.0 185.6 642.0 185.6 642.0 184.9 644.0 184.9 644.0 183.4 645.0 183.4 645.0 187.3 647.0 187.3 647.0 194.0 648.0 194.0 648.0 193.9 650.0 193.9 650.0 196.2 652.0 196.2 652.0 186.4 655.0 186.4 655.0 191.3 657.0 191.3 657.0 192.3 660.0 192.3 660.0 193.8 662.0 193.8 662.0 193.4 664.0 193.4 664.0 183.4 667.0 183.4 667.0 187.9 669.0 187.9 669.0 188.7 670.0 188.7 670.0 192.8 671.0 192.8 671.0 196.6 673.0 196.6 673.0 192.3 675.0 192.3 675.0 193.8 678.0 193.8 678.0 194.4 679.0 194.4 679.0 204.2 682.0 204.2 682.0 205.4 683.0 205.4 683.0 193.8 686.0 193.8 686.0 194.9 688.0 194.9 688.0 196.9 689.0 196.9 689.0 191.4 691.0 191.4 691.0 180.0 692.0 180.0 692.0 179.2 693.0 179.2 693.0 174.0 694.0 174.0 694.0 170.6 695.0 170.6 695.0 177.5 696.0 177.5 696.0 179.5 697.0 179.5 697.0 186.4 700.0 186.4 700.0 170.6 702.0 170.6 702.0 173.6 705.0 173.6 705.0 176.2 706.0 176.2 706.0 173.6 708.0 173.6 708.0 182.0 709.0 182.0 709.0 158.2 712.0 158.2 712.0 158.7 715.0 158.7 715.0 139.0 716.0 139.0 716.0 103.8 718.0 103.8 718.0 108.7 719.0 108.7 719.0 114.8 720.0 114.8 720.0 108.3 721.0 108.3 721.0 118.5 723.0 118.5 723.0 91.1 724.0 91.1 724.0 66.7 726.0 66.7 726.0 53.4 728.0 53.4 728.0 88.8 730.0 88.8 730.0 100.2 731.0 100.2 731.0 99.4 734.0 99.4 734.0 142.4 735.0 142.4 735.0 161.7 737.0 161.7 737.0 158.7 738.0 158.7 738.0 161.7 741.0 161.7 741.0 141.0 742.0 141.0 742.0 118.2 745.0 118.2 745.0 74.1 747.0 74.1 747.0 71.2 749.0 71.2 749.0 85.7 750.0 85.7 750.0 82.5 751.0 82.5 751.0 84.5 753.0 84.5 753.0 91.0 755.0 91.0 755.0 121.4 756.0 121.4 756.0 123.0 758.0 123.0 758.0 157.3 759.0 157.3 759.0 140.9 762.0 140.9 762.0 149.6 763.0 149.6 763.0 156.5 764.0 156.5 764.0 133.8 767.0 133.8 767.0 117.4 768.0 117.4 768.0 112.7 770.0 112.7 770.0 128.6 772.0 128.6 772.0 117.2 774.0 117.2 774.0 126.2 776.0 126.2 776.0 123.5 777.0 123.5 777.0 104.1 779.0 104.1 779.0 92.7 780.0 92.7 780.0 87.5 781.0 87.5 781.0 87.7 782.0 87.7 782.0 86.8 783.0 86.8 783.0 87.8 784.0 87.8 784.0 78.6 787.0 78.6 787.0 77.1 789.0 77.1 789.0 83.0 791.0 83.0 791.0 90.7 793.0 90.7 793.0 97.9 794.0 97.9 794.0 108.7 796.0 108.7 796.0 98.9 797.0 98.9 797.0 94.9 799.0 94.9 799.0 124.6 800.0 124.6 800.0 129.0 803.0 129.0 803.0 142.4 805.0 142.4 805.0 155.8 807.0 155.8 807.0 149.8 810.0 149.8 810.0 152.8 811.0 152.8 811.0 140.9 812.0 140.9 812.0 149.6 813.0 149.6 813.0 135.0 815.0 135.0 815.0 106.8 818.0 106.8 818.0 137.8 821.0 137.8 821.0 146.9 824.0 146.9 824.0 135.0 825.0 135.0 825.0 139.0 826.0 139.0 826.0 126.1 829.0 126.1 829.0 148.3 831.0 148.3 831.0 146.9 833.0 146.9 833.0 167.6 835.0 167.6 835.0 164.7 837.0 164.7 837.0 158.7 840.0 158.7 840.0 180.7 841.0 180.7 841.0 177.0 842.0 177.0 842.0 184.1 844.0 184.1 844.0 155.8 847.0 155.8 847.0 140.9 849.0 140.9 849.0 155.5 851.0 155.5 851.0 119.4 852.0 119.4 852.0 114.5 853.0 114.5 853.0 130.4 854.0 130.4 854.0 109.0 857.0 109.0 857.0 98.6 859.0 98.6 859.0 113.4 860.0 113.4 860.0 132.8 861.0 132.8 861.0 132.4 863.0 132.4 863.0 149.0 865.0 149.0 865.0 172.8 867.0 172.8 867.0 182.8 868.0 182.8 868.0 184.7 869.0 184.7 869.0 188.4 871.0 188.4 871.0 188.3 873.0 188.3 873.0 178.7 876.0 178.7 876.0 179.8 877.0 179.8 877.0 162.4 880.0 162.4 880.0 169.6 882.0 169.6 882.0 152.0 884.0 152.0 884.0 169.7 886.0 169.7 886.0 174.3 889.0 174.3 889.0 178.8 891.0 178.8 891.0 179.0 893.0 179.0 893.0 181.7 894.0 181.7 894.0 185.8 896.0 185.8 896.0 184.4 897.0 184.4 897.0 178.7 898.0 178.7 898.0 180.9 899.0 180.9 899.0 183.3 900.0 183.3 900.0 181.3 901.0 181.3 901.0 177.2 903.0 177.2 903.0 170.7 904.0 170.7 904.0 159.4 906.0 159.4 906.0 163.9 909.0 163.9 909.0 163.7 911.0 163.7 911.0 158.0 913.0 158.0 913.0 181.6 915.0 181.6 915.0 189.3 916.0 189.3 916.0 179.1 917.0 179.1 917.0 175.8 918.0 175.8 918.0 183.9 920.0 183.9 920.0 181.7 922.0 181.7 922.0 172.8 925.0 172.8 925.0 170.2 926.0 170.2 926.0 168.3 928.0 168.3 928.0 171.8 930.0 171.8 930.0 166.9 932.0 166.9 932.0 176.6 933.0 176.6 933.0 176.1 935.0 176.1 935.0 229.0 937.0 229.0 937.0 229.0 938.0 229.0 938.0 229.0 939.0 229.0 939.0 229.0 940.0 229.0 940.0 250.0 941.0 250.0 941.0 230.0 943.0 230.0 943.0 230.0 944.0 230.0 944.0 174.3 946.0 174.3 946.0 177.7 949.0 177.7 949.0 184.7 951.0 184.7 951.0 184.7 953.0 184.7 953.0 190.6 954.0 190.6 954.0 194.0 957.0 194.0 957.0 187.6 960.0 187.6 960.0 188.9 961.0 188.9 961.0 191.4 962.0 191.4 962.0 192.3 963.0 192.3 963.0 190.6 965.0 190.6 965.0 190.6 967.0 190.6 967.0 187.3 968.0 187.3 968.0 191.9 969.0 191.9 969.0 186.2 971.0 186.2 971.0 191.2 973.0 191.2 973.0 190.6 975.0 190.6 975.0 196.8 977.0 196.8 977.0 196.3 978.0 196.3 978.0 192.8 980.0 192.8 980.0 177.2 982.0 177.2 982.0 180.2 984.0 180.2 984.0 194.7 985.0 194.7 985.0 177.2 988.0 177.2 988.0 179.8 989.0 179.8 989.0 190.6 990.0 190.6 990.0 183.6 992.0 183.6 992.0 187.8 995.0 187.8 995.0 189.7 996.0 189.7 996.0 197.2 998.0 197.2 998.0 190.7 999.0 190.7 999.0 196.0 1000.0 196.0 1000.0 196.6 1001.0 196.6 1001.0 197.8 1003.0 197.8 1003.0 202.9 1004.0 202.9 1004.0 201.2 1005.0 201.2 1005.0 177.6 1007.0 177.6 1007.0 182.8 1008.0 182.8 1008.0 197.0 1009.0 197.0 1009.0 180.6 1011.0 180.6 1011.0 188.4 1013.0 188.4 1013.0 180.6 1014.0 180.6 1014.0 188.6 1016.0 188.6 1016.0 196.8 1019.0 196.8 1019.0 192.8 1022.0 192.8 1022.0 197.5 1024.0 197.5 1024.0 196.8 1026.0 196.8 1026.0 172.0 1027.0 172.0 1027.0 165.4 1028.0 165.4 1028.0 194.8 1030.0 194.8 1030.0 191.8 1031.0 191.8 1031.0 186.7 1032.0 186.7 1032.0 189.1 1033.0 189.1 1033.0 183.0 1034.0 183.0 1034.0 180.6 1037.0 180.6 1037.0 190.7 1038.0 190.7 1038.0 196.8 1040.0 196.8 1040.0 177.6 1042.0 177.6 1042.0 187.6 1043.0 187.6 1043.0 176.3 1044.0 176.3 1044.0 162.4 1047.0 162.4 1047.0 172.2 1049.0 172.2 1049.0 176.6 1050.0 176.6 1050.0 182.2 1051.0 182.2 1051.0 194.3 1052.0 194.3 1052.0 197.7 1053.0 197.7 1053.0 202.9 1054.0 202.9 1054.0 255.5 1053.0 255.5 1053.0 256.6 1052.0 256.6 1052.0 258.5 1051.0 258.5 1051.0 256.2 1050.0 256.2 1050.0 257.5 1049.0 257.5 1049.0 241.7 1047.0 241.7 1047.0 252.7 1044.0 252.7 1044.0 253.5 1043.0 253.5 1043.0 251.3 1042.0 251.3 1042.0 249.4 1040.0 249.4 1040.0 244.7 1038.0 244.7 1038.0 245.1 1037.0 245.1 1037.0 251.5 1034.0 251.5 1034.0 243.3 1033.0 243.3 1033.0 241.0 1032.0 241.0 1032.0 245.9 1031.0 245.9 1031.0 243.3 1030.0 243.3 1030.0 249.4 1028.0 249.4 1028.0 245.0 1027.0 245.0 1027.0 247.4 1026.0 247.4 1026.0 246.8 1024.0 246.8 1024.0 246.4 1022.0 246.4 1022.0 240.9 1019.0 240.9 1019.0 248.7 1016.0 248.7 1016.0 251.5 1014.0 251.5 1014.0 249.4 1013.0 249.4 1013.0 243.8 1011.0 243.8 1011.0 247.4 1009.0 247.4 1009.0 246.0 1008.0 246.0 1008.0 245.4 1007.0 245.4 1007.0 247.2 1005.0 247.2 1005.0 243.7 1004.0 243.7 1004.0 242.0 1003.0 242.0 1003.0 243.5 1001.0 243.5 1001.0 244.8 1000.0 244.8 1000.0 240.3 999.0 240.3 999.0 245.4 998.0 245.4 998.0 246.3 996.0 246.3 996.0 243.9 995.0 243.9 995.0 246.3 992.0 246.3 992.0 245.3 990.0 245.3 990.0 242.7 989.0 242.7 989.0 243.9 988.0 243.9 988.0 247.1 985.0 247.1 985.0 247.0 984.0 247.0 984.0 252.9 982.0 252.9 982.0 243.7 980.0 243.7 980.0 247.2 978.0 247.2 978.0 245.6 977.0 245.6 977.0 251.5 975.0 251.5 975.0 251.0 973.0 251.0 973.0 246.3 971.0 246.3 971.0 242.8 969.0 242.8 969.0 241.6 968.0 241.6 968.0 247.2 967.0 247.2 967.0 245.7 965.0 245.7 965.0 245.4 963.0 245.4 963.0 244.4 962.0 244.4 962.0 245.3 961.0 245.3 961.0 246.4 960.0 246.4 960.0 249.1 957.0 249.1 957.0 247.2 954.0 247.2 954.0 242.6 953.0 242.6 953.0 246.5 951.0 246.5 951.0 251.3 949.0 251.3 949.0 264.2 946.0 264.2 946.0 305.8 943.0 305.8 943.0 315.2 941.0 315.2 941.0 319.9 939.0 319.9 939.0 312.6 938.0 312.6 938.0 316.5 937.0 316.5 937.0 293.0 935.0 293.0 935.0 277.2 933.0 277.2 933.0 279.3 932.0 279.3 932.0 270.8 930.0 270.8 930.0 281.2 928.0 281.2 928.0 266.3 926.0 266.3 926.0 274.8 925.0 274.8 925.0 269.9 922.0 269.9 922.0 263.6 920.0 263.6 920.0 271.8 918.0 271.8 918.0 267.2 917.0 267.2 917.0 270.6 916.0 270.6 916.0 271.1 915.0 271.1 915.0 273.7 913.0 273.7 913.0 270.1 911.0 270.1 911.0 269.9 909.0 269.9 909.0 270.8 906.0 270.8 906.0 266.9 904.0 266.9 904.0 269.9 903.0 269.9 903.0 264.1 901.0 264.1 901.0 261.0 900.0 261.0 900.0 268.9 899.0 268.9 899.0 268.5 898.0 268.5 898.0 264.0 897.0 264.0 897.0 260.6 896.0 260.6 896.0 265.2 894.0 265.2 894.0 263.4 893.0 263.4 893.0 269.9 891.0 269.9 891.0 264.9 889.0 264.9 889.0 269.9 886.0 269.9 886.0 271.8 884.0 271.8 884.0 266.1 882.0 266.1 882.0 273.7 880.0 273.7 880.0 275.6 877.0 275.6 877.0 265.2 876.0 265.2 876.0 271.1 873.0 271.1 873.0 269.9 871.0 269.9 871.0 258.6 869.0 258.6 869.0 255.2 868.0 255.2 868.0 253.7 867.0 253.7 867.0 272.7 865.0 272.7 865.0 292.6 863.0 292.6 863.0 309.0 861.0 309.0 861.0 320.9 860.0 320.9 860.0 316.8 859.0 316.8 859.0 313.2 857.0 313.2 857.0 317.1 854.0 317.1 854.0 293.9 853.0 293.9 853.0 302.0 852.0 302.0 852.0 293.6 851.0 293.6 851.0 286.9 849.0 286.9 849.0 283.1 847.0 283.1 847.0 268.0 844.0 268.0 844.0 264.2 842.0 264.2 842.0 264.6 841.0 264.6 841.0 268.0 840.0 268.0 840.0 260.4 837.0 260.4 837.0 257.9 835.0 257.9 835.0 267.5 833.0 267.5 833.0 275.6 831.0 275.6 831.0 273.3 829.0 273.3 829.0 279.3 826.0 279.3 826.0 286.9 825.0 286.9 825.0 275.1 824.0 275.1 824.0 285.0 821.0 285.0 821.0 290.7 818.0 290.7 818.0 305.8 815.0 305.8 815.0 290.2 813.0 290.2 813.0 289.7 812.0 289.7 812.0 277.5 811.0 277.5 811.0 288.8 810.0 288.8 810.0 283.7 807.0 283.7 807.0 283.8 805.0 283.8 805.0 288.8 803.0 288.8 803.0 296.3 800.0 296.3 800.0 284.3 799.0 284.3 799.0 296.3 797.0 296.3 797.0 311.4 796.0 311.4 796.0 310.7 794.0 310.7 794.0 319.0 793.0 319.0 793.0 316.4 791.0 316.4 791.0 320.9 789.0 320.9 789.0 325.6 787.0 325.6 787.0 315.2 784.0 315.2 784.0 310.9 783.0 310.9 783.0 309.5 782.0 309.5 782.0 306.5 781.0 306.5 781.0 309.6 780.0 309.6 780.0 300.4 779.0 300.4 779.0 305.8 777.0 305.8 777.0 302.4 776.0 302.4 776.0 298.2 774.0 298.2 774.0 293.6 772.0 293.6 772.0 294.4 770.0 294.4 770.0 286.5 768.0 286.5 768.0 292.6 767.0 292.6 767.0 283.1 764.0 283.1 764.0 282.9 763.0 282.9 763.0 285.0 762.0 285.0 762.0 279.3 759.0 279.3 759.0 276.9 758.0 276.9 758.0 302.0 756.0 302.0 756.0 315.3 755.0 315.3 755.0 319.0 753.0 319.0 753.0 324.7 751.0 324.7 751.0 319.2 750.0 319.2 750.0 311.4 749.0 311.4 749.0 317.1 747.0 317.1 747.0 303.9 745.0 303.9 745.0 285.0 742.0 285.0 742.0 264.2 741.0 264.2 741.0 260.4 738.0 260.4 738.0 253.5 737.0 253.5 737.0 258.6 735.0 258.6 735.0 273.7 734.0 273.7 734.0 300.1 731.0 300.1 731.0 291.1 730.0 291.1 730.0 284.5 728.0 284.5 728.0 281.8 726.0 281.8 726.0 320.9 724.0 320.9 724.0 313.3 723.0 313.3 723.0 267.5 721.0 267.5 721.0 244.0 720.0 244.0 720.0 220.5 719.0 220.5 719.0 224.6 718.0 224.6 718.0 232.0 717.0 232.0 717.0 207.0 716.0 207.0 716.0 207.0 715.0 207.0 715.0 207.0 714.0 207.0 714.0 248.0 712.0 248.0 712.0 252.9 709.0 252.9 709.0 248.4 708.0 248.4 708.0 249.4 706.0 249.4 706.0 250.1 705.0 250.1 705.0 250.2 702.0 250.2 702.0 249.1 700.0 249.1 700.0 249.1 697.0 249.1 697.0 248.7 696.0 248.7 696.0 247.7 695.0 247.7 695.0 241.6 694.0 241.6 694.0 245.3 693.0 245.3 693.0 248.7 692.0 248.7 692.0 242.8 691.0 242.8 691.0 242.6 689.0 242.6 689.0 243.0 688.0 243.0 688.0 245.8 686.0 245.8 686.0 245.2 683.0 245.2 683.0 242.3 682.0 242.3 682.0 245.8 679.0 245.8 679.0 242.8 678.0 242.8 678.0 246.1 675.0 246.1 675.0 248.5 673.0 248.5 673.0 249.8 671.0 249.8 671.0 246.2 670.0 246.2 670.0 245.8 669.0 245.8 669.0 251.7 667.0 251.7 667.0 245.8 664.0 245.8 664.0 250.2 662.0 250.2 662.0 244.9 660.0 244.9 660.0 248.7 657.0 248.7 657.0 248.2 655.0 248.2 655.0 244.1 652.0 244.1 652.0 245.8 650.0 245.8 650.0 244.0 648.0 244.0 648.0 244.4 647.0 244.4 647.0 245.8 645.0 245.8 645.0 243.3 644.0 243.3 644.0 245.1 642.0 245.1 642.0 244.5 640.0 244.5 640.0 244.6 639.0 244.6 639.0 243.8 638.0 243.8 638.0 253.9 636.0 253.9 636.0 256.6 634.0 256.6 634.0 260.6 633.0 260.6 633.0 253.3 631.0 253.3 631.0 247.2 628.0 247.2 628.0 244.7 626.0 244.7 626.0 247.5 623.0 247.5 623.0 248.7 621.0 248.7 621.0 248.4 619.0 248.4 619.0 246.0 618.0 246.0 618.0 251.7 617.0 251.7 617.0 249.2 615.0 249.2 615.0 247.3 613.0 247.3 613.0 248.7 611.0 248.7 611.0 246.5 610.0 246.5 610.0 243.8 608.0 243.8 608.0 248.8 606.0 248.8 606.0 247.0 605.0 247.0 605.0 259.1 602.0 259.1 602.0 256.0 600.0 256.0 600.0 251.7 598.0 251.7 598.0 252.4 597.0 252.4 597.0 254.7 595.0 254.7 595.0 270.9 594.0 270.9 594.0 280.2 593.0 280.2 593.0 305.3 592.0 305.3 592.0 337.6 590.0 337.6 590.0 343.7 587.0 343.7 587.0 300.7 586.0 300.7 586.0 284.3 584.0 284.3 584.0 280.6 583.0 280.6 583.0 277.8 582.0 277.8 582.0 278.4 579.0 278.4 579.0 272.9 578.0 272.9 578.0 275.4 576.0 275.4 576.0 268.4 575.0 268.4 575.0 272.5 573.0 272.5 573.0 269.5 571.0 269.5 571.0 264.1 569.0 264.1 569.0 272.5 567.0 272.5 567.0 270.8 565.0 270.8 565.0 274.0 563.0 274.0 563.0 275.4 560.0 275.4 560.0 264.8 558.0 264.8 558.0 269.5 556.0 269.5 556.0 262.6 555.0 262.6 555.0 267.7 553.0 267.7 553.0 261.9 551.0 261.9 551.0 266.5 550.0 266.5 550.0 258.3 549.0 258.3 549.0 263.3 547.0 263.3 547.0 263.0 546.0 263.0 546.0 260.6 543.0 260.6 543.0 254.2 542.0 254.2 542.0 254.7 540.0 254.7 540.0 256.4 539.0 256.4 539.0 259.8 537.0 259.8 537.0 263.9 536.0 263.9 536.0 266.5 535.0 266.5 535.0 264.4 534.0 264.4 534.0 261.4 532.0 261.4 532.0 265.2 530.0 265.2 530.0 266.5 529.0 266.5 529.0 263.9 528.0 263.9 528.0 263.3 527.0 263.3 527.0 263.2 526.0 263.2 526.0 267.3 525.0 267.3 525.0 267.3 524.0 267.3 524.0 267.6 521.0 267.6 521.0 269.5 519.0 269.5 519.0 263.5 518.0 263.5 518.0 263.9 517.0 263.9 517.0 260.3 514.0 260.3 514.0 269.5 511.0 269.5 511.0 269.0 510.0 269.0 510.0 266.3 507.0 266.3 507.0 264.0 505.0 264.0 505.0 269.5 503.0 269.5 503.0 267.7 502.0 267.7 502.0 270.4 501.0 270.4 501.0 278.4 498.0 278.4 498.0 269.5 495.0 269.5 495.0 271.2 494.0 271.2 494.0 273.8 492.0 273.8 492.0 272.5 491.0 272.5 491.0 267.5 490.0 267.5 490.0 264.8 489.0 264.8 489.0 267.7 488.0 267.7 488.0 270.5 486.0 270.5 486.0 263.9 484.0 263.9 484.0 269.5 481.0 269.5 481.0 261.5 480.0 261.5 480.0 261.2 479.0 261.2 479.0 260.8 478.0 260.8 478.0 267.8 475.0 267.8 475.0 269.5 472.0 269.5 472.0 266.7 471.0 266.7 471.0 262.5 469.0 262.5 469.0 262.1 467.0 262.1 467.0 271.1 465.0 271.1 465.0 272.5 462.0 272.5 462.0 262.7 461.0 262.7 461.0 269.5 458.0 269.5 458.0 263.7 455.0 263.7 455.0 267.1 454.0 267.1 454.0 268.7 453.0 268.7 453.0 269.5 451.0 269.5 451.0 263.5 449.0 263.5 449.0 268.2 447.0 268.2 447.0 265.3 446.0 265.3 446.0 272.0 444.0 272.0 444.0 272.5 441.0 272.5 441.0 268.3 439.0 268.3 439.0 269.5 437.0 269.5 437.0 261.9 436.0 261.9 436.0 262.9 434.0 262.9 434.0 261.1 432.0 261.1 432.0 269.5 431.0 269.5 431.0 261.2 429.0 261.2 429.0 263.5 428.0 263.5 428.0 269.2 427.0 269.2 427.0 268.9 426.0 268.9 426.0 271.2 423.0 271.2 423.0 275.4 420.0 275.4 420.0 269.5 418.0 269.5 418.0 259.5 417.0 259.5 417.0 262.1 415.0 262.1Z" fill="#0a5da5"/>
<path d="M413.5 46.5V360.5H1054M413.5 46.5H1054" stroke="#a4a4a4" stroke-width="1.5" fill="none"/>
<text x="404" y="52.3" text-anchor="end" font-size="12" letter-spacing="-0.75">2,61</text>
<text x="404" y="74.7" text-anchor="end" font-size="12" letter-spacing="-0.75">2,6075</text>
<text x="404" y="97.0" text-anchor="end" font-size="12" letter-spacing="-0.75">2,605</text>
<text x="404" y="119.4" text-anchor="end" font-size="12" letter-spacing="-0.75">2,6025</text>
<text x="404" y="141.7" text-anchor="end" font-size="12" letter-spacing="-0.75">2,6</text>
<text x="404" y="164.1" text-anchor="end" font-size="12" letter-spacing="-0.75">2,5975</text>
<text x="404" y="186.4" text-anchor="end" font-size="12" letter-spacing="-0.75">2,595</text>
<text x="404" y="208.8" text-anchor="end" font-size="12" letter-spacing="-0.75">2,5925</text>
<text x="404" y="231.2" text-anchor="end" font-size="12" letter-spacing="-0.75">2,59</text>
<text x="404" y="253.5" text-anchor="end" font-size="12" letter-spacing="-0.75">2,5875</text>
<text x="404" y="275.9" text-anchor="end" font-size="12" letter-spacing="-0.75">2,585</text>
<text x="404" y="298.2" text-anchor="end" font-size="12" letter-spacing="-0.75">2,5825</text>
<text x="404" y="320.6" text-anchor="end" font-size="12" letter-spacing="-0.75">2,58</text>
<text x="404" y="342.9" text-anchor="end" font-size="12" letter-spacing="-0.75">2,5775</text>
<text x="404" y="365.3" text-anchor="end" font-size="12" letter-spacing="-0.75">2,575</text>
<path d="M407 47.5H412M407 69.5H412M407 92.5H412M407 114.5H412M407 136.5H412M407 159.5H412M407 181.5H412M407 203.5H412M407 226.5H412M407 248.5H412M407 271.5H412M407 293.5H412M407 315.5H412M407 338.5H412M407 360.5H412M414.5 362V367M421.5 362V365M427.5 362V365M434.5 362V365M440.5 362V365M447.5 362V365M454.5 362V365M460.5 362V365M467.5 362V365M474.5 362V365M480.5 362V365M487.5 362V365M493.5 362V365M500.5 362V365M507.5 362V365M513.5 362V367M520.5 362V365M526.5 362V365M533.5 362V365M540.5 362V365M546.5 362V365M553.5 362V365M559.5 362V365M566.5 362V365M573.5 362V365M579.5 362V365M586.5 362V365M593.5 362V365M599.5 362V365M606.5 362V365M612.5 362V367M619.5 362V365M626.5 362V365M632.5 362V365M639.5 362V365M645.5 362V365M652.5 362V365M659.5 362V365M665.5 362V365M672.5 362V365M678.5 362V365M685.5 362V365M692.5 362V365M698.5 362V365M705.5 362V365M712.5 362V367M718.5 362V365M725.5 362V365M731.5 362V365M738.5 362V365M745.5 362V365M751.5 362V365M758.5 362V365M764.5 362V365M771.5 362V365M778.5 362V365M784.5 362V365M791.5 362V365M797.5 362V365M804.5 362V365M811.5 362V367M817.5 362V365M824.5 362V365M831.5 362V365M837.5 362V365M844.5 362V365M850.5 362V365M857.5 362V365M864.5 362V365M870.5 362V365M877.5 362V365M883.5 362V365M890.5 362V365M897.5 362V365M903.5 362V365M910.5 362V367M916.5 362V365M923.5 362V365M930.5 362V365M936.5 362V365M943.5 362V365M950.5 362V365M956.5 362V365M963.5 362V365M969.5 362V365M976.5 362V365M983.5 362V365M989.5 362V365M996.5 362V365M1002.5 362V365M1009.5 362V367M1053.5 362V367" stroke="#000" stroke-width="1"/>
<text x="414.5" y="379" text-anchor="middle" font-size="12" letter-spacing="-0.75">00,000</text>
<text x="513.5" y="379" text-anchor="middle" font-size="12" letter-spacing="-0.75">15:00,000</text>
<text x="612.5" y="379" text-anchor="middle" font-size="12" letter-spacing="-0.75">30:00,000</text>
<text x="712.5" y="379" text-anchor="middle" font-size="12" letter-spacing="-0.75">45:00,000</text>
<text x="811.5" y="379" text-anchor="middle" font-size="12" letter-spacing="-0.75">01:00:00,000</text>
<text x="910.5" y="379" text-anchor="middle" font-size="12" letter-spacing="-0.75">01:15:00,000</text>
<text x="1053" y="379" text-anchor="middle" font-size="12" letter-spacing="-0.75">01:36:39,000</text>
<rect x="1054.5" y="46.5" width="73" height="23" fill="#fff" stroke="#a8a8a8"/>
<path d="M1061 58.5H1074M1067.5 52V65" stroke="#000" stroke-width="1.3"/><circle cx="1067.5" cy="58.5" r="1.5" fill="#fff" stroke="#000" stroke-width="0.9"/><rect x="1059.6" y="52.2" width="3.8" height="3.8" rx="1" fill="#6cb44e" stroke="#4a8a3a" stroke-width="0.6"/>
<rect x="1084" y="53.2" width="3" height="2.8" fill="#555"/><circle cx="1093.7" cy="56.6" r="4.1" fill="#e4e4f4" stroke="#000" stroke-width="1.3"/><path d="M1091.4 56.6H1096M1093.7 54.3V58.9" stroke="#000" stroke-width="1.3"/><path d="M1085.6 64.2L1090.2 60" stroke="#000" stroke-width="1.8"/><path d="M1093.4 62.6H1097.8L1095.6 64.9Z" fill="#000"/>
<rect x="1108" y="53.2" width="2.8" height="2.8" fill="#555"/><path d="M1110.6 58.8L1112.8 62.8L1114.2 64H1118.8L1120.8 61V56.2C1120.8 55.2 1119.4 55.2 1119.4 56.2V57.8V54.2C1119.4 53.2 1117.8 53.2 1117.8 54.2V57.5V53C1117.8 52 1116.1 52 1116.1 53V57.5V53.5C1116.1 52.5 1114.4 52.5 1114.4 53.5V59.5L1112.6 57.6C1111.8 56.9 1110.6 57.5 1110.6 58.8Z" stroke="#000" stroke-width="0.9" fill="#fff" stroke-linejoin="round"/>
<path d="M1054.5 69.5V347.5H1138.5V69.5" stroke="#d0d0d0" fill="none"/>
<rect x="1055" y="70" width="83" height="277" fill="#fff"/>
<path d="M1054.5 46.5V360" stroke="#a8a8a8"/>
<rect x="1058" y="75" width="12" height="12" fill="#3d7fb8"/><path d="M1060.5 81.5L1063.3 84.5L1067.8 77.5" stroke="#fff" stroke-width="1.3" fill="none"/>
<text x="1076" y="85.5" font-size="12" letter-spacing="-0.75">00</text>
<rect x="1106.5" y="73.5" width="28" height="18" fill="#f4f7fa" stroke="#a0a0a0"/>
<path d="M1108.5 86L1121 76.5L1133 86" stroke="#0c4f8a" stroke-width="2" fill="none"/>
<rect x="1058" y="98" width="12" height="12" fill="#3d7fb8"/><path d="M1060.5 104.5L1063.3 107.5L1067.8 100.5" stroke="#fff" stroke-width="1.3" fill="none"/>
<text x="1076" y="108.5" font-size="12" letter-spacing="-0.75">01</text>
<rect x="1106.5" y="96.5" width="28" height="18" fill="#f4f7fa" stroke="#a0a0a0"/>
<path d="M1108.5 109L1121 99.5L1133 109" stroke="#e03c3c" stroke-width="2" fill="none"/>
<rect x="1058" y="121" width="12" height="12" fill="#3d7fb8"/><path d="M1060.5 127.5L1063.3 130.5L1067.8 123.5" stroke="#fff" stroke-width="1.3" fill="none"/>
<text x="1076" y="131.5" font-size="12" letter-spacing="-0.75">02</text>
<rect x="1106.5" y="119.5" width="28" height="18" fill="#f4f7fa" stroke="#a0a0a0"/>
<path d="M1108.5 132L1121 122.5L1133 132" stroke="#1ec81e" stroke-width="2" fill="none"/>
<rect x="1058" y="144" width="12" height="12" fill="#3d7fb8"/><path d="M1060.5 150.5L1063.3 153.5L1067.8 146.5" stroke="#fff" stroke-width="1.3" fill="none"/>
<text x="1076" y="154.5" font-size="12" letter-spacing="-0.75">03</text>
<rect x="1106.5" y="142.5" width="28" height="18" fill="#f4f7fa" stroke="#a0a0a0"/>
<path d="M1108.5 155L1121 145.5L1133 155" stroke="#3cb4f0" stroke-width="2" fill="none"/>
<rect x="1058" y="167" width="12" height="12" fill="#3d7fb8"/><path d="M1060.5 173.5L1063.3 176.5L1067.8 169.5" stroke="#fff" stroke-width="1.3" fill="none"/>
<text x="1076" y="177.5" font-size="12" letter-spacing="-0.75">04</text>
<rect x="1106.5" y="165.5" width="28" height="18" fill="#f4f7fa" stroke="#a0a0a0"/>
<path d="M1108.5 178L1121 168.5L1133 178" stroke="#d2f78c" stroke-width="2" fill="none"/>
<rect x="1058" y="190" width="12" height="12" fill="#3d7fb8"/><path d="M1060.5 196.5L1063.3 199.5L1067.8 192.5" stroke="#fff" stroke-width="1.3" fill="none"/>
<text x="1076" y="200.5" font-size="12" letter-spacing="-0.75">05</text>
<rect x="1106.5" y="188.5" width="28" height="18" fill="#f4f7fa" stroke="#a0a0a0"/>
<path d="M1108.5 201L1121 191.5L1133 201" stroke="#b43ce6" stroke-width="2" fill="none"/>
<rect x="1058" y="213" width="12" height="12" fill="#3d7fb8"/><path d="M1060.5 219.5L1063.3 222.5L1067.8 215.5" stroke="#fff" stroke-width="1.3" fill="none"/>
<text x="1076" y="223.5" font-size="12" letter-spacing="-0.75">06</text>
<rect x="1106.5" y="211.5" width="28" height="18" fill="#f4f7fa" stroke="#a0a0a0"/>
<path d="M1108.5 224L1121 214.5L1133 224" stroke="#f0a01e" stroke-width="2" fill="none"/>
<rect x="1058" y="236" width="12" height="12" fill="#3d7fb8"/><path d="M1060.5 242.5L1063.3 245.5L1067.8 238.5" stroke="#fff" stroke-width="1.3" fill="none"/>
<text x="1076" y="246.5" font-size="12" letter-spacing="-0.75">07</text>
<rect x="1106.5" y="234.5" width="28" height="18" fill="#f4f7fa" stroke="#a0a0a0"/>
<path d="M1108.5 247L1121 237.5L1133 247" stroke="#3c3cdc" stroke-width="2" fill="none"/>
<rect x="1058" y="259" width="12" height="12" fill="#3d7fb8"/><path d="M1060.5 265.5L1063.3 268.5L1067.8 261.5" stroke="#fff" stroke-width="1.3" fill="none"/>
<text x="1076" y="269.5" font-size="12" letter-spacing="-0.75">08</text>
<rect x="1106.5" y="257.5" width="28" height="18" fill="#f4f7fa" stroke="#a0a0a0"/>
<path d="M1108.5 270L1121 260.5L1133 270" stroke="#dc46a0" stroke-width="2" fill="none"/>
<rect x="1058" y="282" width="12" height="12" fill="#3d7fb8"/><path d="M1060.5 288.5L1063.3 291.5L1067.8 284.5" stroke="#fff" stroke-width="1.3" fill="none"/>
<text x="1076" y="292.5" font-size="12" letter-spacing="-0.75">09</text>
<rect x="1106.5" y="280.5" width="28" height="18" fill="#f4f7fa" stroke="#a0a0a0"/>
<path d="M1108.5 293L1121 283.5L1133 293" stroke="#5aebdc" stroke-width="2" fill="none"/>
<rect x="1058" y="305" width="12" height="12" fill="#3d7fb8"/><path d="M1060.5 311.5L1063.3 314.5L1067.8 307.5" stroke="#fff" stroke-width="1.3" fill="none"/>
<text x="1076" y="315.5" font-size="12" letter-spacing="-0.75">10</text>
<rect x="1106.5" y="303.5" width="28" height="18" fill="#f4f7fa" stroke="#a0a0a0"/>
<path d="M1108.5 316L1121 306.5L1133 316" stroke="#0a4c86" stroke-width="2" fill="none"/>
<rect x="1058" y="328" width="12" height="12" fill="#3d7fb8"/><path d="M1060.5 334.5L1063.3 337.5L1067.8 330.5" stroke="#fff" stroke-width="1.3" fill="none"/>
<text x="1076" y="338.5" font-size="12" letter-spacing="-0.75">11</text>
<rect x="1106.5" y="326.5" width="28" height="18" fill="#f4f7fa" stroke="#a0a0a0"/>
<path d="M1108.5 339L1121 329.5L1133 339" stroke="#dc4040" stroke-width="2" fill="none"/>
<path d="M1145.5 76.5L1149.5 81.5H1141.5Z" fill="#a8a8a8"/><rect x="1143" y="85" width="5" height="29" fill="#a9a9a9"/><path d="M1141.5 339.5H1149.5L1145.5 344.5Z" fill="#a8a8a8"/>
</svg></body></html>
